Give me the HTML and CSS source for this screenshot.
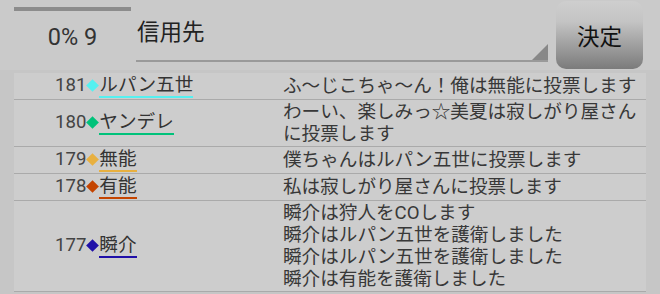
FILE: index.html
```html
<!DOCTYPE HTML>
<html>
<head>
	<meta charset="utf-8" />
	<title>投票</title>
	<link rel="stylesheet" href="styles.css">
</head>
<body>

<div class="header">
	<div class="meter">
		<div class="meter-bar"></div>
		<div class="meter-text">0% 9</div>
	</div>
	<div class="spinner">
		<span class="spinner-text">信用先</span>
		<span class="spinner-arrow"></span>
	</div>
	<button class="decide">決定</button>
</div>

<table class="log">
	<tr>
		<td class="who">181<span class="gem gem-181"></span><span class="name name-181">ルパン五世</span></td>
		<td class="msg">ふ〜じこちゃ〜ん！俺は無能に投票します</td>
	</tr>
	<tr>
		<td class="who">180<span class="gem gem-180"></span><span class="name name-180">ヤンデレ</span></td>
		<td class="msg">わーい、楽しみっ☆美夏は寂しがり屋さん<br>に投票します</td>
	</tr>
	<tr>
		<td class="who">179<span class="gem gem-179"></span><span class="name name-179">無能</span></td>
		<td class="msg">僕ちゃんはルパン五世に投票します</td>
	</tr>
	<tr>
		<td class="who">178<span class="gem gem-178"></span><span class="name name-178">有能</span></td>
		<td class="msg">私は寂しがり屋さんに投票します</td>
	</tr>
	<tr>
		<td class="who">177<span class="gem gem-177"></span><span class="name name-177">瞬介</span></td>
		<td class="msg">瞬介は狩人をCOします<br>瞬介はルパン五世を護衛しました<br>瞬介はルパン五世を護衛しました<br>瞬介は有能を護衛しました</td>
	</tr>
</table>

</body>
</html>
```

FILE: styles.css
```css
body {
	margin: 0;
	background: #c6c6c6;
	font-family: "Roboto", "Noto Sans CJK JP", sans-serif;
	color: #383838;
}

.header {
	display: flex;
	height: 70px;
	background: #cacaca;
}

.meter {
	width: 117px;
	margin-left: 14px;
}

.meter-bar {
	height: 4px;
	margin-top: 7px;
	background: #8c8c8c;
}

.meter-text {
	margin-top: 13px;
	font-size: 23.5px;
	line-height: 26px;
	text-align: center;
	color: #333;
}

.spinner {
	display: flex;
	justify-content: space-between;
	width: 412px;
	height: 60px;
	margin-left: 5px;
	border-bottom: 2px solid #9a9a9a;
}

.spinner-text {
	align-self: flex-start;
	margin-top: 17px;
	margin-left: 1px;
	font-size: 22.5px;
	line-height: 30px;
	color: #222;
}

.spinner-arrow {
	align-self: flex-end;
	width: 16px;
	height: 16px;
	background: #888;
	clip-path: polygon(100% 0, 100% 100%, 0 100%);
}

.decide {
	width: 87px;
	height: 68px;
	margin: 1px 0 0 8px;
	border: 0;
	border-radius: 10px;
	background: linear-gradient(#cecece, #c4c4c4 30%, #7b7b7b);
	font-family: "Noto Sans CJK JP", sans-serif;
	font-size: 22.5px;
	color: #111;
	padding: 0;
}

.log {
	width: 632px;
	margin: 3px 14px 0;
	border-collapse: collapse;
	background: #cdcdcd;
	font-size: 18.6px;
	line-height: 22px;
}

.log td {
	padding: 1px 0;
	border-bottom: 1.5px solid #aaa;
	vertical-align: middle;
}

.who {
	width: 228px;
	padding-left: 41px !important;
	white-space: nowrap;
	color: #444;
}

.msg {
	color: #383838;
}

.gem {
	display: inline-block;
	width: 9px;
	height: 9px;
	margin: 0 2px 2px 2px;
	transform: rotate(45deg);
	vertical-align: middle;
}

.name {
	display: inline-block;
	line-height: 20px;
	padding-bottom: 1px;
	border-bottom: 2px solid;
	color: #333;
}

.gem-181 { background: #55f0f0; }
.name-181 { border-color: #55f0f0; }
.gem-180 { background: #00c27a; }
.name-180 { border-color: #00c27a; }
.gem-179 { background: #e8b040; }
.name-179 { border-color: #e8b040; }
.gem-178 { background: #c44400; }
.name-178 { border-color: #c44400; }
.gem-177 { background: #2010a8; }
.name-177 { border-color: #2010a8; }
```
